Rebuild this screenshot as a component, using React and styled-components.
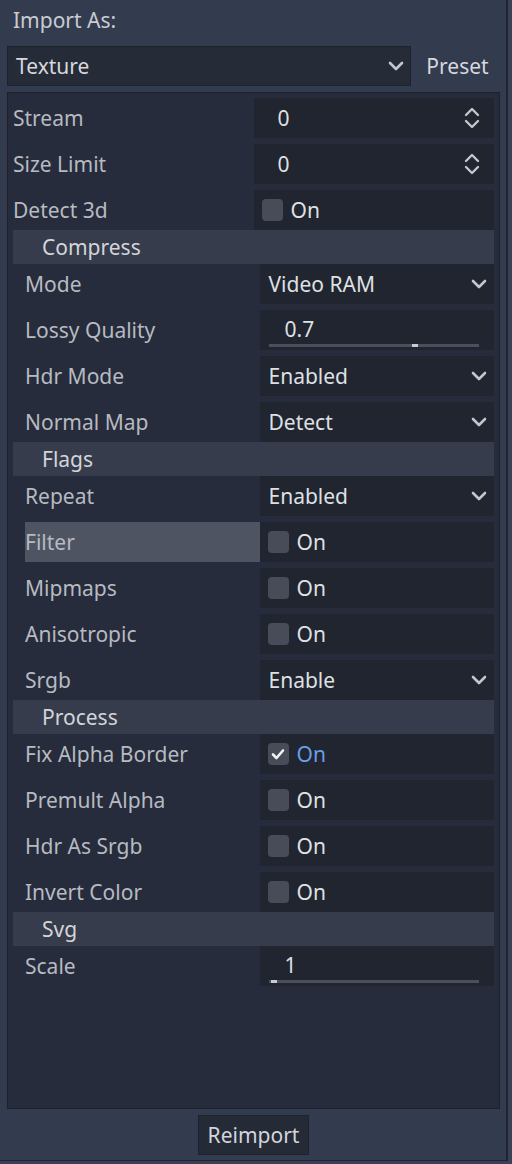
import React from 'react';
import styled, { createGlobalStyle } from 'styled-components';

const GlobalStyle = createGlobalStyle`
    html, body {
        margin: 0;
        padding: 0;
        background: #3a4155;
    }
    body {
        font-family: "Noto Sans", "DejaVu Sans", sans-serif;
        font-size: 21px;
    }
`;

// Whole import dock
const Dock = styled.div`
    width: 508px;
    height: 1161px;
    box-sizing: border-box;
    background-color: #333b4f;
    border-right: 2px solid #1f2433;
    border-bottom: 1px solid #1f2433;
    display: flex;
    flex-direction: column;
    gap: 6px;
    padding: 0 6px 5px 7px;
`;

const Title = styled.div`
    height: 40px;
    line-height: 40px;
    padding-left: 6px;
    color: #c9cbd1;
`;

const TopRow = styled.div`
    display: flex;
    align-items: stretch;
    height: 40px;
    gap: 4px;
`;

const ImportSelect = styled.div`
    flex: 1;
    display: flex;
    align-items: center;
    justify-content: space-between;
    box-sizing: border-box;
    background-color: #262b38;
    border: 1px solid #1e222d;
    padding: 0 6px 0 8px;
    color: #d6d8dc;
`;

const FlatButton = styled.div`
    width: 85px;
    display: flex;
    align-items: center;
    justify-content: center;
    color: #d6d8dc;
`;

// Property inspector panel
const Panel = styled.div`
    flex: 1;
    box-sizing: border-box;
    background-color: #262c3b;
    border: 1px solid #1d212c;
    padding: 0 5px;
    display: flex;
    flex-direction: column;
`;

const Group = styled.div`
    display: flex;
    flex-direction: column;
    gap: 6px;
    padding-top: ${p => (p.top ? '5px' : '0')};
    padding-left: ${p => (p.sub ? '12px' : '0')};
`;

const Row = styled.div`
    display: grid;
    grid-template-columns: 1fr 1fr;
    height: 40px;
`;

const Label = styled.div`
    display: flex;
    align-items: center;
    color: #b7bac1;
    background-color: ${p => (p.hover ? '#4f5462' : 'transparent')};
    white-space: nowrap;
`;

const Field = styled.div`
    position: relative;
    display: flex;
    align-items: center;
    justify-content: space-between;
    background-color: #21252f;
    color: #dfe0e3;
    padding: 0 ${p => p.padRight || 8}px 0 ${p => p.padLeft || 8}px;
`;

const Section = styled.div`
    height: 34px;
    display: flex;
    align-items: center;
    padding-left: 29px;
    background-color: #363c4b;
    color: #d3d5da;
`;

const CheckWrap = styled.div`
    display: flex;
    align-items: center;
    gap: 8px;
    color: ${p => (p.checked ? '#6a9de8' : '#dfe0e3')};
`;

const Box = styled.div`
    width: 21px;
    height: 22px;
    border-radius: 4px;
    background-color: #474c58;
    display: flex;
    align-items: center;
    justify-content: center;
`;

const Track = styled.div`
    position: absolute;
    left: 9px;
    right: 15px;
    bottom: 3px;
    height: 3px;
    background-color: #4a4f5b;
`;

const Grabber = styled.div`
    position: absolute;
    top: 0;
    width: 6px;
    height: 3px;
    background-color: #c9cbd0;
`;

const SliderText = styled.span`
    padding-left: 16px;
    margin-top: -2px;
`;

const Footer = styled.div`
    display: flex;
    justify-content: center;
    height: 40px;
`;

const Button = styled.div`
    width: 111px;
    box-sizing: border-box;
    display: flex;
    align-items: center;
    justify-content: center;
    background-color: #252a37;
    border: 1px solid #1e222d;
    color: #d3d5da;
`;

const Chevron = () => (
    <svg width="16" height="10" viewBox="0 0 16 10">
        <path d="M2 2 L8 8 L14 2" fill="none" stroke="#c3c6cc" strokeWidth="2.6" strokeLinecap="round" strokeLinejoin="round" />
    </svg>
);

const Spinner = () => (
    <svg width="16" height="22" viewBox="0 0 16 22">
        <path d="M2 8 L8 2 L14 8" fill="none" stroke="#c3c6cc" strokeWidth="2.4" strokeLinecap="round" strokeLinejoin="round" />
        <path d="M2 14 L8 20 L14 14" fill="none" stroke="#c3c6cc" strokeWidth="2.4" strokeLinecap="round" strokeLinejoin="round" />
    </svg>
);

const Tick = () => (
    <svg width="16" height="14" viewBox="0 0 16 14">
        <path d="M3 7.5 L6.5 11 L13 3.5" fill="none" stroke="#f2f2f2" strokeWidth="2.6" strokeLinecap="round" strokeLinejoin="round" />
    </svg>
);

const Spin = ({ value }) => (
    <Field padLeft={24} padRight={14}>
        <span>{value}</span>
        <Spinner />
    </Field>
);

const Select = ({ value }) => (
    <Field padLeft={9} padRight={7}>
        <span>{value}</span>
        <Chevron />
    </Field>
);

const Check = ({ checked }) => (
    <Field>
        <CheckWrap checked={checked}>
            <Box>{checked && <Tick />}</Box>
            <span>On</span>
        </CheckWrap>
    </Field>
);

const Slider = ({ value, ratio }) => (
    <Field padLeft={9}>
        <SliderText>{value}</SliderText>
        <Track>
            <Grabber style={{ left: `calc(${ratio * 100}% - ${ratio * 6}px)` }} />
        </Track>
    </Field>
);

const Prop = ({ label, hover, children }) => (
    <Row>
        <Label hover={hover}>{label}</Label>
        {children}
    </Row>
);

export default function App() {
    return (
        <>
            <GlobalStyle />
            <Dock>
                <Title>Import As:</Title>
                <TopRow>
                    <ImportSelect>
                        <span>Texture</span>
                        <Chevron />
                    </ImportSelect>
                    <FlatButton>Preset</FlatButton>
                </TopRow>

                <Panel>
                    <Group top>
                        <Prop label="Stream"><Spin value="0" /></Prop>
                        <Prop label="Size Limit"><Spin value="0" /></Prop>
                        <Prop label="Detect 3d"><Check /></Prop>
                    </Group>

                    <Section>Compress</Section>
                    <Group sub>
                        <Prop label="Mode"><Select value="Video RAM" /></Prop>
                        <Prop label="Lossy Quality"><Slider value="0.7" ratio={0.7} /></Prop>
                        <Prop label="Hdr Mode"><Select value="Enabled" /></Prop>
                        <Prop label="Normal Map"><Select value="Detect" /></Prop>
                    </Group>

                    <Section>Flags</Section>
                    <Group sub>
                        <Prop label="Repeat"><Select value="Enabled" /></Prop>
                        <Prop label="Filter" hover><Check /></Prop>
                        <Prop label="Mipmaps"><Check /></Prop>
                        <Prop label="Anisotropic"><Check /></Prop>
                        <Prop label="Srgb"><Select value="Enable" /></Prop>
                    </Group>

                    <Section>Process</Section>
                    <Group sub>
                        <Prop label="Fix Alpha Border"><Check checked /></Prop>
                        <Prop label="Premult Alpha"><Check /></Prop>
                        <Prop label="Hdr As Srgb"><Check /></Prop>
                        <Prop label="Invert Color"><Check /></Prop>
                    </Group>

                    <Section>Svg</Section>
                    <Group sub>
                        <Prop label="Scale"><Slider value="1" ratio={0.01} /></Prop>
                    </Group>
                </Panel>

                <Footer>
                    <Button>Reimport</Button>
                </Footer>
            </Dock>
        </>
    );
}
